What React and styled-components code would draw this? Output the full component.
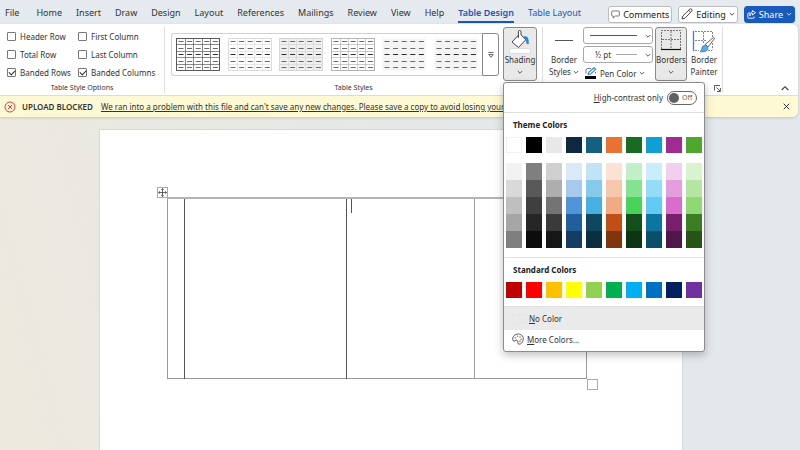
import React, { useState } from "react";
import styled, { createGlobalStyle, css } from "styled-components";

const tabs = [
  "Home",
  "Insert",
  "Draw",
  "Design",
  "Layout",
  "References",
  "Mailings",
  "Review",
  "View",
  "Help",
];

const styleOptions = [
  { id: "header-row", label: "Header Row", checked: false },
  { id: "first-column", label: "First Column", checked: false },
  { id: "total-row", label: "Total Row", checked: false },
  { id: "last-column", label: "Last Column", checked: false },
  { id: "banded-rows", label: "Banded Rows", checked: true },
  { id: "banded-columns", label: "Banded Columns", checked: true },
];

const tableStyles = [
  { name: "Table Grid", line: "#5a5a5a", fill: "#ffffff" },
  { name: "Table Grid Light", line: "#dcdcdc", fill: "#ffffff" },
  { name: "Plain Table 1", line: "#d6d6d6", fill: "#efefef" },
  { name: "Plain Table 2", line: "#b4b4b4", fill: "#ffffff" },
  { name: "Plain Table 3", line: "none", fill: "#f4f4f4" },
  { name: "Plain Table 4", line: "none", fill: "#f4f4f4" },
];

const themeColors = [
  { base: "#ffffff", shades: ["#f2f2f2", "#d9d9d9", "#bfbfbf", "#a6a6a6", "#7f7f7f"] },
  { base: "#000000", shades: ["#7f7f7f", "#595959", "#3f3f3f", "#262626", "#0c0c0c"] },
  { base: "#e8e8e8", shades: ["#d0d0d0", "#aeaeae", "#747474", "#3a3a3a", "#171717"] },
  { base: "#0e2841", shades: ["#dae9f8", "#a6c9ec", "#4e95d9", "#215f9a", "#153d64"] },
  { base: "#156082", shades: ["#c0e4f5", "#83caeb", "#45b0e1", "#0f4761", "#0a2f40"] },
  { base: "#e97132", shades: ["#fbe2d5", "#f6c6ad", "#f2aa84", "#c04f15", "#7f340d"] },
  { base: "#196b24", shades: ["#c1f0c8", "#84e291", "#47d459", "#124f1a", "#0c3512"] },
  { base: "#0f9ed5", shades: ["#caedfb", "#95dcf7", "#61cbf4", "#0b769f", "#074f6a"] },
  { base: "#a02b93", shades: ["#f2ceef", "#e59edd", "#d86dcd", "#78206e", "#501549"] },
  { base: "#4ea72e", shades: ["#d9f2d0", "#b4e5a2", "#8ed973", "#3b7d23", "#275317"] },
];

const standardColors = [
  "#c00000",
  "#ff0000",
  "#ffc000",
  "#ffff00",
  "#92d050",
  "#00b050",
  "#00b0f0",
  "#0070c0",
  "#002060",
  "#7030a0",
];

function Chevron({ up, size = 6 }) {
  return (
    <svg width={size} height={size} viewBox="0 0 6 6" fill="none" stroke="currentColor">
      <path d={up ? "M0.5 4.5 3 2 5.5 4.5" : "M0.8 2 3 4.2 5.2 2"} strokeWidth="0.8" />
    </svg>
  );
}

function StyleThumb({ line, fill }) {
  const xs = [0, 1, 2, 3, 4];
  return (
    <svg width="44" height="33" viewBox="0 0 44 33">
      <rect x="0.5" y="0.5" width="43" height="32" fill={fill} stroke={line} />
      {line !== "none" && (
        <path
          d="M9.5 0V33M17.5 0V33M26.5 0V33M34.5 0V33M0 6.5H44M0 13.5H44M0 19.5H44M0 26.5H44"
          stroke={line}
          strokeWidth="0.7"
        />
      )}
      {xs.map((r) => (
        <path
          key={r}
          d={xs.map((c) => `M${2.5 + c * 8.6} ${[3.5, 10.5, 16.5, 23.5, 29.5][r]}h5`).join("")}
          stroke={r === 2 ? "#2a2a2a" : "#6a6a6a"}
        />
      ))}
    </svg>
  );
}

function BucketIcon() {
  return (
    <svg width="28" height="24" viewBox="0 0 28 24" fill="none">
      <path
        d="M12.500 5 6 12l6.500 5.500L20 9.500 15 5V1.800a1.300 1.300 0 0 0-2.600 0V8"
        fill="#fff"
        stroke="#444"
        strokeWidth="1"
        strokeLinejoin="round"
      />
      <path d="M17.500 6.500c4-1 5.500 1.500 5.300 7.500h-2.300c0-3-.8-4.500-3-5.500z" fill="#2f86cf" />
      <rect x="3.500" y="18.500" width="21" height="5" fill="#fff" stroke="#dcdcdc" />
    </svg>
  );
}

function BordersIcon() {
  return (
    <svg width="20" height="21" viewBox="0 0 20 21" fill="none" stroke="#555">
      <path d="M.5 19V.500H19.500V19M10 1V19M1 9.500H19" strokeDasharray="2 1" strokeWidth=".8" />
      <path d="M0 19.500H20" stroke="#111" strokeWidth="1.200" />
    </svg>
  );
}

function PainterIcon() {
  return (
    <svg width="24" height="23" viewBox="0 0 24 23" fill="none">
      <path
        d="M3 1.500H20.500V7M20.500 13V19.500M11.500 2V13M3 10.500H15M3 20.500H7M16 20.500H20"
        stroke="#666"
        strokeWidth=".8"
        strokeDasharray="2 1"
      />
      <path d="M1.500 1V21" stroke="#2f86cf" strokeWidth="1.300" />
      <path d="M13 14.500 21 7.800c1-.7 1.900.3 1.200 1.200L16 17z" fill="#fff" stroke="#555" strokeWidth=".9" />
      <path
        d="M8 21.500c2-.6 1.300-2.700 2.300-4.500 1.200-2 3.500-2.400 4.700-1 1.400 1.600.8 4-1 5-1.600 1-4 1-6 .5z"
        fill="#5aaae6"
        stroke="#2474bd"
        strokeWidth=".8"
      />
    </svg>
  );
}

function PenColorIcon() {
  return (
    <svg width="12" height="12" viewBox="0 0 12 12" fill="none">
      <path d="M6 1.500H2.500a1.500 1.500 0 0 0-1.500 1.500V6.500M10.500 5V6.500" stroke="#555" strokeWidth=".8" />
      <path d="M3.200 7.500 4 5 9 .8l1.700 1.500L5.700 7z" fill="#fff" stroke="#2f86cf" strokeWidth="1.100" />
      <rect x="0" y="9" width="11" height="3" fill="#000" />
    </svg>
  );
}

function PaletteIcon() {
  return (
    <svg width="12" height="12" viewBox="0 0 12 12" fill="none">
      <path
        d="M1 7.500C-.3 4 3 .8 6.500 1c3.500.1 5.300 3.200 4.700 5.800-.5 2.600-2.300 4.600-4.200 4.400-2.200-.4-.3-3-1.800-3.900C3.800 6.500 2.500 9.200 1 7.500z"
        stroke="#4a4a4a"
        strokeWidth=".9"
      />
      <circle cx="3.400" cy="4.800" r=".8" fill="#3d8fd6" />
      <circle cx="5.500" cy="3.300" r=".8" fill="#4ea76a" />
      <circle cx="8" cy="3.900" r=".8" fill="#e08a3c" />
      <circle cx="9" cy="6.200" r=".8" fill="#d9534f" />
      <circle cx="8" cy="8.400" r=".8" fill="#c45ab3" />
    </svg>
  );
}

function ShadingMenu() {
  const [contrast, setContrast] = useState(false);

  return (
    <Menu>
      <ContrastRow>
        <label htmlFor="contrast">
          <u>H</u>igh-contrast only
        </label>
        <Toggle>
          <input
            id="contrast"
            type="checkbox"
            checked={contrast}
            onChange={(e) => setContrast(e.target.checked)}
          />
          <span>{contrast ? "On" : "Off"}</span>
        </Toggle>
      </ContrastRow>
      <MenuSection>
        <MenuTitle>Theme Colors</MenuTitle>
        <SwatchGrid>
          {themeColors.map((c) => (
            <Swatch key={c.base} $color={c.base} aria-label={c.base} />
          ))}
        </SwatchGrid>
        <ShadeGrid>
          {themeColors.map((c) => (
            <ShadeColumn key={c.base}>
              {c.shades.map((s) => (
                <Shade key={s} $color={s} aria-label={s} />
              ))}
            </ShadeColumn>
          ))}
        </ShadeGrid>
      </MenuSection>
      <MenuSection>
        <MenuTitle>Standard Colors</MenuTitle>
        <SwatchGrid>
          {standardColors.map((c) => (
            <Swatch key={c} $color={c} aria-label={c} />
          ))}
        </SwatchGrid>
      </MenuSection>
      <MenuItem $active>
        <NoColorBox />
        <span>
          <u>N</u>o Color
        </span>
      </MenuItem>
      <MenuItem>
        <PaletteIcon />
        <span>
          <u>M</u>ore Colors...
        </span>
      </MenuItem>
    </Menu>
  );
}

function Ribbon() {
  return (
    <RibbonBar>
      <Group>
        <Options>
          {styleOptions.map((o) => (
            <Option key={o.id} htmlFor={o.id}>
              <Checkbox id={o.id} type="checkbox" defaultChecked={o.checked} />
              {o.label}
            </Option>
          ))}
        </Options>
        <Caption>Table Style Options</Caption>
      </Group>

      <Group $grow>
        <StylesRow>
          <Gallery>
            <Thumbs>
              {tableStyles.map((s) => (
                <ThumbButton key={s.name} aria-label={s.name}>
                  <StyleThumb line={s.line} fill={s.fill} />
                </ThumbButton>
              ))}
            </Thumbs>
            <GalleryMore aria-label="More table styles">
              <svg width="6" height="6" viewBox="0 0 6 6" fill="none" stroke="#444" strokeWidth=".8">
                <path d="M.5 .5H5.500M.8 2.500H5.200L3 5.200z" />
              </svg>
            </GalleryMore>
          </Gallery>
          <ShadingWrap>
            <BigButton $pressed $width={34}>
              <BucketIcon />
              <span>Shading</span>
              <Chevron />
            </BigButton>
            <ShadingMenu />
          </ShadingWrap>
        </StylesRow>
        <Caption>Table Styles</Caption>
      </Group>

      <Group>
        <BordersRow>
          <BigButton $width={34}>
            <StyleLine />
            <span>Border</span>
            <span>
              Styles <Chevron />
            </span>
          </BigButton>
          <Pens>
            <Picker>
              <select aria-label="Line style">
                <option aria-label="Single line"></option>
              </select>
              <PickerFace>
                <PickerLine $dark />
                <Chevron />
              </PickerFace>
            </Picker>
            <Picker>
              <select aria-label="Line weight">
                <option>½ pt</option>
              </select>
              <PickerFace $indent>
                <PickerLine />
                <Chevron />
              </PickerFace>
            </Picker>
            <PenButton>
              <PenColorIcon />
              Pen Color
              <Chevron />
            </PenButton>
          </Pens>
          <BigButton $pressed $width={32}>
            <BordersIcon />
            <span>Borders</span>
            <Chevron />
          </BigButton>
          <BigButton $width={30}>
            <PainterIcon />
            <span>Border</span>
            <span>Painter</span>
          </BigButton>
        </BordersRow>
        <Launcher aria-label="Borders and shading options">
          <svg width="7" height="7" viewBox="0 0 7 7" fill="none" stroke="#444" strokeWidth=".9">
            <path d="M.5 5.500V.5H6M2.500 2.500 6 6M6.400 3V6.500H3" />
          </svg>
        </Launcher>
      </Group>

      <CollapseArea>
        <IconButton aria-label="Collapse ribbon">
          <Chevron up size={8} />
        </IconButton>
      </CollapseArea>
    </RibbonBar>
  );
}

function App() {
  return (
    <>
      <GlobalStyle />
      <Window>
        <TopBar>
          <TabList>
            <FileTab>File</FileTab>
            {tabs.map((t) => (
              <Tab key={t}>{t}</Tab>
            ))}
            <Tab $accent $current>
              Table Design
            </Tab>
            <Tab $accent>Table Layout</Tab>
          </TabList>
          <Actions>
            <ActionButton>
              <svg width="9" height="9" viewBox="0 0 9 9" fill="none" stroke="#555" strokeWidth=".8">
                <path d="M1.500 1H7.500a.8.8 0 0 1 .8.800V5.200a.8.8 0 0 1-.8.800H4.500L2.300 8V6H1.500a.8.8 0 0 1-.8-.8V1.800A.8.8 0 0 1 1.500 1z" />
              </svg>
              Comments
            </ActionButton>
            <ActionButton>
              <svg width="12" height="12" viewBox="0 0 12 12" fill="none" stroke="#333" strokeWidth=".9">
                <path d="M1 11 1.800 8 8.800 1.200a1.200 1.200 0 0 1 1.900 1.900L4 10.200zM7.700 2.300 9.600 4.200" />
              </svg>
              Editing
              <Chevron />
            </ActionButton>
            <ActionButton $primary>
              <svg width="9" height="9" viewBox="0 0 9 9" fill="none" stroke="currentColor" strokeWidth=".9">
                <path d="M3 3H1.500a.7.7 0 0 0-.7.700V7.500a.7.7 0 0 0 .7.700H6.500a.7.7 0 0 0 .7-.7V6.500M2.800 6C3 4 4 3.500 5.500 3.500V5L8.500 2.700 5.500.6V2C3.500 2.200 2.700 3.800 2.800 6z" />
              </svg>
              Share
              <Chevron />
            </ActionButton>
          </Actions>
        </TopBar>

        <Panel>
          <Ribbon />
          <Banner role="alert">
            <svg width="12" height="12" viewBox="0 0 12 12" fill="none" stroke="#e0404c">
              <circle cx="6" cy="6" r="5" />
              <path d="M3.900 3.900 8.100 8.100M8.100 3.900 3.900 8.100" />
            </svg>
            <strong>UPLOAD BLOCKED</strong>
            <a href="#save-copy">
              We ran into a problem with this file and can't save any new changes. Please save a copy to
              avoid losing your work.
            </a>
            <IconButton aria-label="Close message">
              <svg width="7" height="7" viewBox="0 0 7 7" stroke="#333">
                <path d="M.7.7 6.300 6.300M6.300.7.7 6.300" />
              </svg>
            </IconButton>
          </Banner>
        </Panel>

        <Workspace>
          <Page>
            <TableFrame>
              <MoveHandle aria-label="Move table">
                <svg width="9" height="9" viewBox="0 0 9 9" fill="none" stroke="#444" strokeWidth=".8">
                  <path d="M4.500.5V8.500M.5 4.500H8.500M3.200 1.800 4.500.5 5.800 1.800M3.200 7.200 4.500 8.500 5.800 7.200M1.800 3.200.5 4.500 1.800 5.800M7.200 3.200 8.500 4.500 7.200 5.800" />
                </svg>
              </MoveHandle>
              <DocTable>
                <colgroup>
                  <Column $width={17} />
                  <Column />
                  <Column $width={128} />
                  <Column $width={112} />
                </colgroup>
                <tbody>
                  <tr>
                    <Cell $dark />
                    <Cell $dark />
                    <Cell>
                      <Caret />
                    </Cell>
                    <Cell />
                  </tr>
                </tbody>
              </DocTable>
              <ResizeHandle aria-label="Resize table" />
            </TableFrame>
          </Page>
        </Workspace>
      </Window>
    </>
  );
}

const GlobalStyle = createGlobalStyle`
  * {
    box-sizing: border-box;
  }

  body {
    margin: 0;
    overflow: hidden;
    font-family: "Noto Sans", "Open Sans", sans-serif;
    font-size: 8px;
    color: #333;
  }

  button, select, input {
    font: inherit;
    color: inherit;
    margin: 0;
    padding: 0;
    border: 0;
    background: none;
  }

  svg {
    flex-shrink: 0;
  }
`;

const Window = styled.div`
  height: 100vh;
  display: flex;
  flex-direction: column;
  background: linear-gradient(75deg, #ece9de 0%, #e8e8e4 35%, #e3e8eb 75%, #e1e7eb 100%);
`;

const TopBar = styled.header`
  height: 24px;
  display: flex;
  align-items: center;
  justify-content: space-between;
  padding: 4px 5px 0 5px;
  background: #e4eaee;
`;

const TabList = styled.nav`
  display: flex;
  align-items: center;
  gap: 14px;
`;

const Tab = styled.button`
  height: 18px;
  line-height: 16px;
  font-size: 9px;
  white-space: nowrap;
  border-bottom: 2px solid transparent;
  color: ${(p) => (p.$accent ? "#1c55b5" : "#333")};

  ${(p) =>
    p.$current &&
    css`
      font-weight: 600;
      border-color: #1c55b5;
    `}
`;

const FileTab = styled(Tab)`
  margin-right: 3px;
`;

const Actions = styled.div`
  display: flex;
  gap: 6px;
`;

const ActionButton = styled.button`
  height: 17px;
  display: flex;
  align-items: center;
  gap: 3px;
  padding: 0 2px;
  font-size: 9px;
  border: 1px solid ${(p) => (p.$primary ? "#185abd" : "#b9bdc0")};
  border-radius: 3px;
  background: ${(p) => (p.$primary ? "#185abd" : "#fff")};
  color: ${(p) => (p.$primary ? "#fff" : "#222")};
`;

const Panel = styled.div`
  margin-right: 2px;
  border-radius: 0 6px 6px 0;
  background: #fff;
  box-shadow: 0 1px 3px rgba(0, 0, 0, 0.15);
`;

const RibbonBar = styled.section`
  height: 72px;
  display: flex;
  border-bottom: 1px solid #dcdcd4;
`;

const Group = styled.div`
  flex: ${(p) => (p.$grow ? "0 1 378px" : "none")};
  display: flex;
  flex-direction: column;
  justify-content: space-between;
  margin: 3px 0 2px;
  border-right: 1px solid #dedede;
`;

const Caption = styled.div`
  text-align: center;
  font-size: 7px;
  line-height: 10px;
`;

const Options = styled.div`
  display: grid;
  grid-template-columns: 71px 80px;
  padding: 0 6px 0 7px;
`;

const Option = styled.label`
  height: 18px;
  display: flex;
  align-items: center;
  gap: 4px;
  white-space: nowrap;
`;

const Checkbox = styled.input`
  appearance: none;
  flex-shrink: 0;
  width: 9px;
  height: 9px;
  display: flex;
  justify-content: center;
  border: 1px solid #777;
  border-radius: 1px;
  background: #fff;

  &:checked::after {
    content: "";
    width: 3px;
    height: 5px;
    border: solid #333;
    border-width: 0 1px 1px 0;
    transform: rotate(45deg);
  }
`;

const StylesRow = styled.div`
  display: flex;
  padding: 0 5px 0 6px;
  gap: 4px;
`;

const Gallery = styled.div`
  flex: 1;
  height: 43px;
  margin-top: 6px;
  display: flex;
`;

const Thumbs = styled.div`
  flex: 1;
  display: flex;
  align-items: center;
  justify-content: space-between;
  padding: 0 4px;
  border: 1px solid #d0d0d0;
  border-right: 0;
  border-radius: 3px 0 0 3px;
`;

const ThumbButton = styled.button`
  display: flex;
`;

const GalleryMore = styled.button`
  width: 17px;
  border: 1px solid #888;
  border-radius: 0 3px 3px 0;
`;

const ShadingWrap = styled.div`
  position: relative;
`;

const BigButton = styled.button`
  width: ${(p) => p.$width}px;
  height: 54px;
  display: flex;
  flex-direction: column;
  align-items: center;
  padding: 2px 0;
  line-height: 12px;
  white-space: nowrap;
  border: 1px solid ${(p) => (p.$pressed ? "#8a8a8a" : "transparent")};
  border-radius: 3px;
  background: ${(p) => (p.$pressed ? "#e9e9e9" : "transparent")};

  > svg:first-child,
  > i:first-child {
    margin-bottom: auto;
  }

  > svg:last-child {
    margin: 3px 0;
  }
`;

const StyleLine = styled.i`
  width: 18px;
  height: 11px;
  border-bottom: 1px solid #555;
`;

const BordersRow = styled.div`
  display: flex;
  gap: 2px;
  padding: 0 3px 0 4px;
`;

const Pens = styled.div`
  width: 70px;
  display: flex;
  flex-direction: column;
  gap: 2px;
`;

const Picker = styled.div`
  position: relative;
  height: 17px;

  select {
    appearance: none;
    display: block;
    width: 100%;
    height: 17px;
    padding: 0 11px;
    border: 1px solid #a8a8a8;
    border-radius: 3px;
    background: #fff;
  }
`;

const PickerFace = styled.div`
  position: absolute;
  inset: 0;
  display: flex;
  align-items: center;
  justify-content: space-between;
  gap: 8px;
  padding: 0 2px 0 ${(p) => (p.$indent ? 33 : 7)}px;
  pointer-events: none;
`;

const PickerLine = styled.i`
  flex: 1;
  height: 1px;
  background: ${(p) => (p.$dark ? "#555" : "#aaa")};
`;

const PenButton = styled.button`
  display: flex;
  align-items: center;
  gap: 3px;
  height: 16px;
  padding-left: 2px;
  white-space: nowrap;
`;

const Launcher = styled.button`
  align-self: flex-end;
  display: flex;
  margin: 0 1px 1px 0;
`;

const CollapseArea = styled.div`
  flex: 1;
  display: flex;
  align-items: flex-end;
  justify-content: flex-end;
  padding: 0 7px 1px 0;
`;

const IconButton = styled.button`
  width: 12px;
  height: 12px;
  display: flex;
  align-items: center;
  justify-content: center;
`;

const Banner = styled.div`
  height: 21px;
  display: flex;
  align-items: center;
  gap: 6px;
  padding: 0 6px 0 4px;
  border-radius: 0 0 6px 0;
  background: #fef9d5;
  white-space: nowrap;

  strong {
    margin-right: 2px;
    font-weight: 600;
  }

  a {
    color: inherit;
    text-underline-offset: 1px;
  }

  ${IconButton} {
    margin-left: auto;
  }
`;

const Menu = styled.div`
  position: absolute;
  z-index: 10;
  top: 55px;
  left: 0;
  width: 202px;
  padding-bottom: 3px;
  border: 1px solid #8c8c8c;
  border-radius: 3px;
  background: #fff;
  box-shadow: 0 3px 9px rgba(0, 0, 0, 0.25);
`;

const ContrastRow = styled.div`
  height: 30px;
  display: flex;
  align-items: center;
  justify-content: flex-end;
  gap: 4px;
  padding-right: 7px;
  border-bottom: 1px solid #e0e0e0;
`;

const Toggle = styled.span`
  width: 30px;
  height: 14px;
  display: flex;
  align-items: center;
  gap: 3px;
  padding-left: 1px;
  border: 1px solid #666;
  border-radius: 7px;
  font-size: 7px;
  color: #666;

  input {
    appearance: none;
    width: 10px;
    height: 10px;
    border-radius: 50%;
    background: #616161;
  }
`;

const MenuSection = styled.div`
  padding: 5px 2px 8px;
  border-bottom: 1px solid #e0e0e0;
`;

const MenuTitle = styled.h2`
  margin: 0 0 5px;
  padding-left: 7px;
  font-size: 8px;
  line-height: 14px;
  font-weight: 700;
  color: #222;
`;

const SwatchGrid = styled.div`
  display: flex;
  justify-content: space-between;
`;

const ShadeGrid = styled(SwatchGrid)`
  padding: 10px 0 1px;
`;

const Swatch = styled.button`
  width: 16px;
  height: 16px;
  background: ${(p) => p.$color};
  box-shadow: ${(p) => (p.$color === "#ffffff" ? "inset 0 0 0 1px #f1f1f1" : "none")};
`;

const ShadeColumn = styled.div`
  display: flex;
  flex-direction: column;
`;

const Shade = styled(Swatch)`
  height: 17px;
`;

const MenuItem = styled.button`
  width: 100%;
  height: ${(p) => (p.$active ? 23 : 18)}px;
  display: flex;
  align-items: center;
  gap: 3px;
  padding-left: 8px;
  background: ${(p) => (p.$active ? "#eaeaea" : "transparent")};
`;

const NoColorBox = styled.i`
  width: 14px;
  height: 10px;
  border: 1px solid #e6e6e6;
`;

const Workspace = styled.main`
  flex: 1;
  min-height: 0;
  display: flex;
  padding: 13px 118px 0 100px;
`;

const Page = styled.article`
  flex: 1;
  padding: 67px 95px 0 67px;
  background: #fff;
  box-shadow: 0 0 1px rgba(0, 0, 0, 0.4);
`;

const TableFrame = styled.div`
  position: relative;
`;

const DocTable = styled.table`
  width: 100%;
  height: 182px;
  table-layout: fixed;
  border-collapse: collapse;
  border: 1px solid #999;
  border-top: 2px solid #b4b4b4;
`;

const Column = styled.col`
  width: ${(p) => (p.$width ? `${p.$width}px` : "auto")};
`;

const Cell = styled.td`
  padding: 0 4px;
  vertical-align: top;
  border-right: 1px solid ${(p) => (p.$dark ? "#555" : "#999")};
`;

const Caret = styled.i`
  display: block;
  width: 1px;
  height: 14px;
  background: #555;
`;

const handle = css`
  position: absolute;
  width: 11px;
  height: 11px;
  border: 1px solid #aaa;
  background: #fff;
`;

const MoveHandle = styled.button`
  ${handle}
  display: flex;
  align-items: center;
  justify-content: center;
  top: -10px;
  left: -10px;
`;

const ResizeHandle = styled.button`
  ${handle}
  right: -11px;
  bottom: -11px;
`;

export default App;
